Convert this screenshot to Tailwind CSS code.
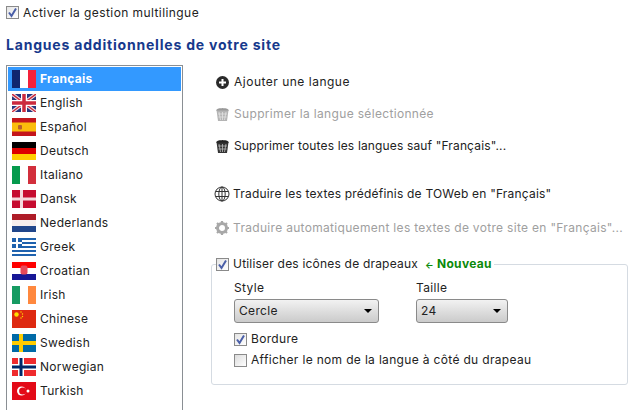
<!DOCTYPE html>
<html lang="fr">
<head>
    <meta charset="UTF-8">
    <title>Gestion multilingue</title>
    <script src="https://cdn.jsdelivr.net/npm/@tailwindcss/browser@4"></script>
</head>
<body class="w-[639px] h-[410px] overflow-hidden bg-white font-['Inter',sans-serif] text-[12px] text-[#222]">
    <div class="flex items-center gap-[4px] pl-[6px] pt-[1px] h-[24px] tracking-[0.42px]">
        <span class="w-[13px] h-[13px] border border-[#8a8a8a] bg-gradient-to-br from-[#e4e4e4] to-white flex items-center justify-center">
            <svg width="11" height="11" viewBox="0 0 11 11"><path d="M2 5.5 L4.5 9 L9 1.5" fill="none" stroke="#4a5fa8" stroke-width="2"/></svg>
        </span>
        <span>Activer la gestion multilingue</span>
    </div>
    <h2 class="pl-[6px] mt-[10px] h-[22px] leading-[22px] text-[14px] font-bold text-[#17398c] tracking-[0.8px]">Langues additionnelles de votre site</h2>

    <div class="flex mt-[9px]">
        <!-- liste des langues -->
        <div class="ml-[6px] w-[177px] h-[360px] border border-[#8a8f94] border-b-0 p-[1px] shrink-0 tracking-[0.3px]">
            <div class="flex items-center h-[24px] bg-[#3399ff] text-white font-bold pl-[4px] gap-[4px]">
                <svg width="24" height="18" viewBox="0 0 24 18"><rect width="8" height="18" fill="#10266f"/><rect x="8" width="8" height="18" fill="#fff"/><rect x="16" width="8" height="18" fill="#f4213a"/></svg>
                <span>Français</span>
            </div>
            <div class="flex items-center h-[24px] pl-[4px] gap-[4px]">
                <svg width="24" height="18" viewBox="0 0 24 18"><rect width="24" height="18" fill="#27367f"/><path d="M0 0 L24 18 M24 0 L0 18" stroke="#f3dfe2" stroke-width="3.5"/><path d="M0 0 L24 18 M24 0 L0 18" stroke="#cc2a3e" stroke-width="1.4"/><path d="M12 0 V18 M0 9 H24" stroke="#fff" stroke-width="6"/><path d="M12 0 V18 M0 9 H24" stroke="#cc2a3e" stroke-width="3.5"/></svg>
                <span>English</span>
            </div>
            <div class="flex items-center h-[24px] pl-[4px] gap-[4px]">
                <svg width="24" height="18" viewBox="0 0 24 18"><rect width="24" height="18" fill="#c4161c"/><rect y="4.5" width="24" height="9" fill="#fbbd0c"/><rect x="6" y="7" width="4" height="4.5" rx="1" fill="#b9612c"/></svg>
                <span>Español</span>
            </div>
            <div class="flex items-center h-[24px] pl-[4px] gap-[4px]">
                <svg width="24" height="18" viewBox="0 0 24 18"><rect width="24" height="6" fill="#000"/><rect y="6" width="24" height="6" fill="#dd0000"/><rect y="12" width="24" height="6" fill="#ffce00"/></svg>
                <span>Deutsch</span>
            </div>
            <div class="flex items-center h-[24px] pl-[4px] gap-[4px]">
                <svg width="24" height="18" viewBox="0 0 24 18"><rect width="8" height="18" fill="#069a4d"/><rect x="8" width="8" height="18" fill="#fff"/><rect x="16" width="8" height="18" fill="#d22f3c"/></svg>
                <span>Italiano</span>
            </div>
            <div class="flex items-center h-[24px] pl-[4px] gap-[4px]">
                <svg width="24" height="18" viewBox="0 0 24 18"><rect width="24" height="18" fill="#c60c30"/><rect x="8" width="3" height="18" fill="#f4d9dd"/><rect y="7.5" width="24" height="3" fill="#f4d9dd"/></svg>
                <span>Dansk</span>
            </div>
            <div class="flex items-center h-[24px] pl-[4px] gap-[4px]">
                <svg width="24" height="18" viewBox="0 0 24 18"><rect width="24" height="6" fill="#ae1c28"/><rect y="6" width="24" height="6" fill="#f6eeee"/><rect y="12" width="24" height="6" fill="#21468b"/></svg>
                <span>Nederlands</span>
            </div>
            <div class="flex items-center h-[24px] pl-[4px] gap-[4px]">
                <svg width="24" height="18" viewBox="0 0 24 18"><rect width="24" height="18" fill="#fff"/><path d="M0 1 H24 M0 5 H24 M0 9 H24 M0 13 H24 M0 17 H24" stroke="#1f62ae" stroke-width="2"/><rect width="10" height="10" fill="#1f62ae"/><path d="M5 0 V10 M0 5 H10" stroke="#fff" stroke-width="2"/></svg>
                <span>Greek</span>
            </div>
            <div class="flex items-center h-[24px] pl-[4px] gap-[4px]">
                <svg width="24" height="18" viewBox="0 0 24 18"><rect width="24" height="6" fill="#ff0000"/><rect y="6" width="24" height="6" fill="#fff"/><rect y="12" width="24" height="6" fill="#171796"/><rect x="8.5" y="3.5" width="7" height="9" rx="2" fill="#e8495a"/></svg>
                <span>Croatian</span>
            </div>
            <div class="flex items-center h-[24px] pl-[4px] gap-[4px]">
                <svg width="24" height="18" viewBox="0 0 24 18"><rect width="8" height="18" fill="#169b62"/><rect x="8" width="8" height="18" fill="#fff"/><rect x="16" width="8" height="18" fill="#ff883e"/></svg>
                <span>Irish</span>
            </div>
            <div class="flex items-center h-[24px] pl-[4px] gap-[4px]">
                <svg width="24" height="18" viewBox="0 0 24 18"><rect width="24" height="18" fill="#de2910"/><circle cx="4.5" cy="4.5" r="2.2" fill="#ffde00"/><circle cx="9" cy="2" r=".7" fill="#ffde00"/><circle cx="10.5" cy="4" r=".7" fill="#ffde00"/><circle cx="10.5" cy="6.5" r=".7" fill="#ffde00"/><circle cx="9" cy="8" r=".7" fill="#ffde00"/></svg>
                <span>Chinese</span>
            </div>
            <div class="flex items-center h-[24px] pl-[4px] gap-[4px]">
                <svg width="24" height="18" viewBox="0 0 24 18"><rect width="24" height="18" fill="#006aa7"/><rect x="7" width="4" height="18" fill="#fecc00"/><rect y="7" width="24" height="4" fill="#fecc00"/></svg>
                <span>Swedish</span>
            </div>
            <div class="flex items-center h-[24px] pl-[4px] gap-[4px]">
                <svg width="24" height="18" viewBox="0 0 24 18"><rect width="24" height="18" fill="#ef2b2d"/><rect x="6" width="6" height="18" fill="#fff"/><rect y="6" width="24" height="6" fill="#fff"/><rect x="7.5" width="3" height="18" fill="#002868"/><rect y="7.5" width="24" height="3" fill="#002868"/></svg>
                <span>Norwegian</span>
            </div>
            <div class="flex items-center h-[24px] pl-[4px] gap-[4px]">
                <svg width="24" height="18" viewBox="0 0 24 18"><rect width="24" height="18" fill="#e30a17"/><circle cx="9.5" cy="9" r="4.5" fill="#fff"/><circle cx="10.7" cy="9" r="3.6" fill="#e30a17"/><circle cx="16" cy="9" r="1.5" fill="#fff"/></svg>
                <span>Turkish</span>
            </div>
        </div>

        <!-- actions -->
        <div class="ml-[28px] flex-1 pr-[11px]">
            <div class="flex items-center h-[20px] mt-[7px] gap-[4px] pl-[4px] tracking-[0.5px]">
                <svg width="15" height="15" viewBox="0 0 15 15"><circle cx="7.5" cy="7.5" r="6.5" fill="#2a2a2a"/><path d="M7.5 4 V11 M4 7.5 H11" stroke="#fff" stroke-width="2"/></svg>
                <span>Ajouter une langue</span>
            </div>
            <div class="flex items-center h-[20px] mt-[12px] gap-[4px] pl-[4px] text-[#a0a0a0] tracking-[0.33px]">
                <svg width="15" height="15" viewBox="0 0 15 15"><path d="M1.5 3 H13.5 L12 14 H3 Z" fill="#b4b4b4"/><path d="M4 5 L5.5 13 M7.5 5 V13 M11 5 L9.5 13 M3 7 H12 M3.5 10 H11.5" stroke="#e2e2e2" stroke-width=".8"/><path d="M1 3.5 C2 1 5 1.5 7.5 1 C10 1.5 13 1 14 3.5 Z" fill="#999"/></svg>
                <span>Supprimer la langue sélectionnée</span>
            </div>
            <div class="flex items-center h-[20px] mt-[12px] gap-[4px] pl-[4px] tracking-[0.15px]">
                <svg width="15" height="15" viewBox="0 0 15 15"><path d="M1.5 3 H13.5 L12 14 H3 Z" fill="#333"/><path d="M4 5 L5.5 13 M7.5 5 V13 M11 5 L9.5 13 M3 7 H12 M3.5 10 H11.5" stroke="#bbb" stroke-width=".8"/><path d="M1 3.5 C2 1 5 1.5 7.5 1 C10 1.5 13 1 14 3.5 Z" fill="#222"/></svg>
                <span>Supprimer toutes les langues sauf "Français"...</span>
            </div>
            <div class="flex items-center h-[20px] mt-[28px] gap-[3px] pl-[3px] tracking-[0.2px]">
                <svg width="16" height="16" viewBox="0 0 16 16" fill="none" stroke="#333"><circle cx="8" cy="8" r="7"/><ellipse cx="8" cy="8" rx="3.2" ry="7"/><path d="M8 1 V15 M1.5 5.5 H14.5 M1.5 10.5 H14.5"/></svg>
                <span>Traduire les textes prédéfinis de TOWeb en "Français"</span>
            </div>
            <div class="flex items-center h-[20px] mt-[14px] gap-[3px] pl-[3px] text-[#a0a0a0] tracking-[0.31px]">
                <svg width="16" height="16" viewBox="0 0 16 16" fill="none"><circle cx="8" cy="8" r="4.5" stroke="#a8a8a8" stroke-width="3"/><path d="M8 1 V3 M8 13 V15 M1 8 H3 M13 8 H15 M3 3 L4.5 4.5 M11.5 11.5 L13 13 M13 3 L11.5 4.5 M4.5 11.5 L3 13" stroke="#a8a8a8" stroke-width="2.2"/></svg>
                <span>Traduire automatiquement les textes de votre site en "Français"...</span>
            </div>

            <fieldset class="mt-[18px] h-[129px] border border-[#d5dbe2] rounded-[3px] pl-[22px] pt-[2px] tracking-[0.33px]">
                <legend class="-ml-[18px] flex items-center gap-[4px] pr-[2px] h-[16px]">
                    <span class="w-[13px] h-[13px] border border-[#8a8a8a] bg-gradient-to-br from-[#e4e4e4] to-white flex items-center justify-center">
                        <svg width="11" height="11" viewBox="0 0 11 11"><path d="M2 5.5 L4.5 9 L9 1.5" fill="none" stroke="#4a5fa8" stroke-width="2"/></svg>
                    </span>
                    <span class="tracking-[0.2px]">Utiliser des icônes de drapeaux</span>
                    <span class="ml-[3px] text-[#0a8a0a] font-bold tracking-[0.3px]"><span class="text-[9px]">←</span> Nouveau</span>
                </legend>
                <div class="flex gap-[37px] mt-[5px]">
                    <div>
                        <div class="h-[18px] leading-[18px]">Style</div>
                        <div class="w-[145px] h-[24px] mt-[2px] flex items-center justify-between px-[4px] border border-[#8a8a8a] rounded-[3px] bg-gradient-to-b from-[#f2f2f2] to-[#cbcbcb]">
                            <span>Cercle</span>
                            <span class="w-0 h-0 mr-[2px] border-x-[4px] border-x-transparent border-t-[4px] border-t-black"></span>
                        </div>
                    </div>
                    <div>
                        <div class="h-[18px] leading-[18px]">Taille</div>
                        <div class="w-[92px] h-[24px] mt-[2px] flex items-center justify-between px-[4px] border border-[#8a8a8a] rounded-[3px] bg-gradient-to-b from-[#f2f2f2] to-[#cbcbcb]">
                            <span>24</span>
                            <span class="w-0 h-0 mr-[2px] border-x-[4px] border-x-transparent border-t-[4px] border-t-black"></span>
                        </div>
                    </div>
                </div>
                <div class="flex items-center gap-[4px] mt-[6px] h-[20px]">
                    <span class="w-[13px] h-[13px] border border-[#8a8a8a] bg-gradient-to-br from-[#e4e4e4] to-white flex items-center justify-center">
                        <svg width="11" height="11" viewBox="0 0 11 11"><path d="M2 5.5 L4.5 9 L9 1.5" fill="none" stroke="#4a5fa8" stroke-width="2"/></svg>
                    </span>
                    <span>Bordure</span>
                </div>
                <div class="flex items-center gap-[4px] mt-[1px] h-[20px]">
                    <span class="w-[13px] h-[13px] border border-[#8a8a8a] bg-gradient-to-br from-[#dcdcdc] to-white"></span>
                    <span>Afficher le nom de la langue à côté du drapeau</span>
                </div>
            </fieldset>
        </div>
    </div>
</body>
</html>
